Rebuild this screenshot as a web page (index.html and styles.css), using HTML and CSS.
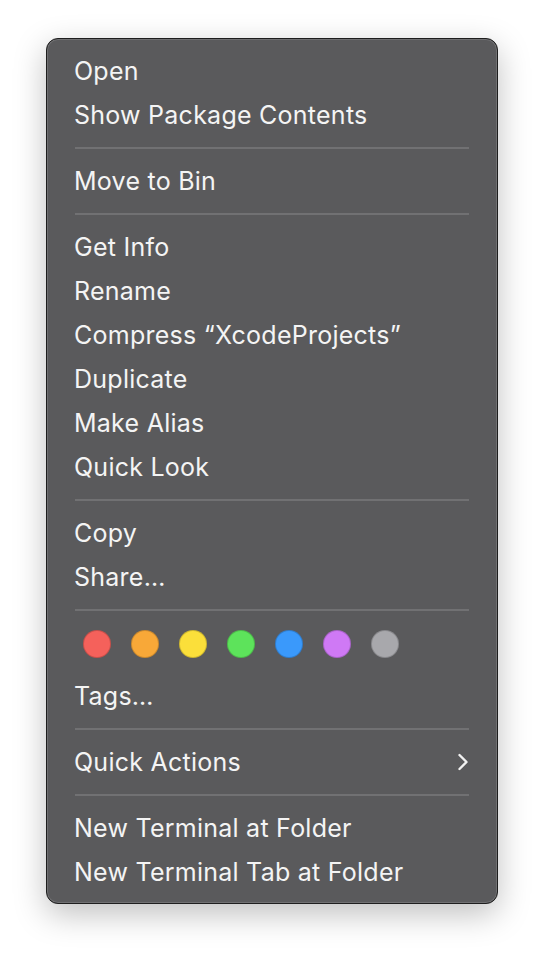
FILE: index.html
```html
<!DOCTYPE html>
<html>
<head>
<meta charset="utf-8">
<link rel="stylesheet" href="styles.css">
</head>
<body>
<div class="menu">
  <div class="item">Open</div>
  <div class="item">Show Package Contents</div>
  <div class="sep"></div>
  <div class="item">Move to Bin</div>
  <div class="sep"></div>
  <div class="item">Get Info</div>
  <div class="item">Rename</div>
  <div class="item">Compress “XcodeProjects”</div>
  <div class="item">Duplicate</div>
  <div class="item">Make Alias</div>
  <div class="item">Quick Look</div>
  <div class="sep"></div>
  <div class="item">Copy</div>
  <div class="item">Share…</div>
  <div class="sep"></div>
  <div class="tags">
    <span class="dot red"></span>
    <span class="dot orange"></span>
    <span class="dot yellow"></span>
    <span class="dot green"></span>
    <span class="dot blue"></span>
    <span class="dot purple"></span>
    <span class="dot gray"></span>
  </div>
  <div class="item">Tags…</div>
  <div class="sep"></div>
  <div class="item sub">
    <span>Quick Actions</span>
    <svg class="chev" width="12" height="18" viewBox="0 0 12 18"><path d="M2.5 2 L9.5 9 L2.5 16" fill="none" stroke="#f2f2f2" stroke-width="2.4" stroke-linecap="round" stroke-linejoin="round"/></svg>
  </div>
  <div class="sep"></div>
  <div class="item">New Terminal at Folder</div>
  <div class="item">New Terminal Tab at Folder</div>
</div>
</body>
</html>
```
FILE: styles.css
```css
html, body {
  margin: 0;
  padding: 0;
  background: #ffffff;
}
body {
  padding: 38px 0 54px 46px;
  font-family: Inter, "Noto Sans", sans-serif;
}
.menu {
  width: 450px;
  box-sizing: content-box;
  background: #5a5a5c;
  border: 1px solid #1e1e1e;
  border-radius: 12px;
  box-shadow: inset 0 0 0 1px #707072, 0 10px 32px rgba(0, 0, 0, 0.25);
  padding: 10px 0 9px 0;
}
.item {
  height: 44px;
  display: flex;
  align-items: center;
  padding: 0 28px 0 27px;
  color: #f4f4f4;
  font-size: 25px;
  letter-spacing: 0.25px;
}
.sub {
  justify-content: space-between;
}
.chev {
  display: block;
}
.sep {
  height: 22px;
  display: flex;
  align-items: center;
  padding: 0 28px;
}
.sep::before {
  content: "";
  display: block;
  flex: 1;
  height: 2px;
  background: #717173;
}
.tags {
  height: 53px;
  box-sizing: border-box;
  padding: 9px 0 0 36px;
  display: flex;
  gap: 20px;
}
.dot {
  width: 28px;
  height: 28px;
  border-radius: 50%;
  box-sizing: border-box;
  border: 1px solid rgba(0, 0, 0, 0.18);
}
.red { background: #f5615b; }
.orange { background: #f8a838; }
.yellow { background: #fbdf3a; }
.green { background: #5de35b; }
.blue { background: #3a99fb; }
.purple { background: #cf79f5; }
.gray { background: #a8a8ac; }
```
